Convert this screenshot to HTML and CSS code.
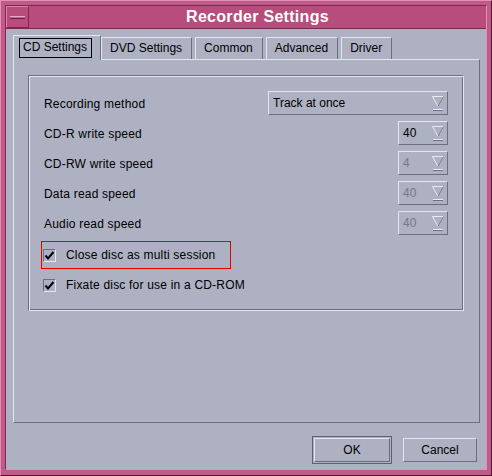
FILE: index.html
```html
<!DOCTYPE html>
<html lang="en">
  <head>
    <meta charset="UTF-8" />
    <title>Recorder Settings</title>
    <link rel="stylesheet" href="styles.css">
  </head>
  <body>
    <div class="window">
      <div class="inner">
        <div class="titlebar">
          <div class="menu-btn"><span class="dash"></span></div>
          <div class="title">Recorder Settings</div>
        </div>

        <div class="client">
          <div class="tabs">
            <div class="tab active"><span class="focus">CD Settings</span></div>
            <div class="tab">DVD Settings</div>
            <div class="tab">Common</div>
            <div class="tab">Advanced</div>
            <div class="tab">Driver</div>
          </div>

          <div class="panel">
            <div class="group">
              <div class="row">
                <span class="label">Recording method</span>
                <div class="combo wide">
                  <span>Track at once</span>
                  <svg class="arrow" width="12" height="16" viewBox="0 0 12 16">
                    <path d="M0.5 0.5 H11.5 L6 10.5 Z" fill="none" stroke="#e9ebf1" />
                    <path d="M11.5 0.5 L6 10.5" stroke="#6b6f80" />
                    <rect x="1" y="13" width="10" height="1" fill="#e9ebf1" />
                    <rect x="1" y="14" width="10" height="1" fill="#6b6f80" />
                  </svg>
                </div>
              </div>
              <div class="row">
                <span class="label">CD-R write speed</span>
                <div class="combo">
                  <span>40</span>
                  <svg class="arrow" width="12" height="16" viewBox="0 0 12 16">
                    <path d="M0.5 0.5 H11.5 L6 10.5 Z" fill="none" stroke="#e9ebf1" />
                    <path d="M11.5 0.5 L6 10.5" stroke="#6b6f80" />
                    <rect x="1" y="13" width="10" height="1" fill="#e9ebf1" />
                    <rect x="1" y="14" width="10" height="1" fill="#6b6f80" />
                  </svg>
                </div>
              </div>
              <div class="row">
                <span class="label">CD-RW write speed</span>
                <div class="combo disabled">
                  <span>4</span>
                  <svg class="arrow" width="12" height="16" viewBox="0 0 12 16">
                    <path d="M0.5 0.5 H11.5 L6 10.5 Z" fill="none" stroke="#e9ebf1" />
                    <path d="M11.5 0.5 L6 10.5" stroke="#6b6f80" />
                    <rect x="1" y="13" width="10" height="1" fill="#e9ebf1" />
                    <rect x="1" y="14" width="10" height="1" fill="#6b6f80" />
                  </svg>
                </div>
              </div>
              <div class="row">
                <span class="label">Data read speed</span>
                <div class="combo disabled">
                  <span>40</span>
                  <svg class="arrow" width="12" height="16" viewBox="0 0 12 16">
                    <path d="M0.5 0.5 H11.5 L6 10.5 Z" fill="none" stroke="#e9ebf1" />
                    <path d="M11.5 0.5 L6 10.5" stroke="#6b6f80" />
                    <rect x="1" y="13" width="10" height="1" fill="#e9ebf1" />
                    <rect x="1" y="14" width="10" height="1" fill="#6b6f80" />
                  </svg>
                </div>
              </div>
              <div class="row">
                <span class="label">Audio read speed</span>
                <div class="combo disabled">
                  <span>40</span>
                  <svg class="arrow" width="12" height="16" viewBox="0 0 12 16">
                    <path d="M0.5 0.5 H11.5 L6 10.5 Z" fill="none" stroke="#e9ebf1" />
                    <path d="M11.5 0.5 L6 10.5" stroke="#6b6f80" />
                    <rect x="1" y="13" width="10" height="1" fill="#e9ebf1" />
                    <rect x="1" y="14" width="10" height="1" fill="#6b6f80" />
                  </svg>
                </div>
              </div>

              <div class="checks">
                <div class="check highlight">
                  <span class="box">
                    <svg width="11" height="11" viewBox="0 0 11 11"><path d="M1.5 5.5 L4 8.5 L9.5 2" fill="none" stroke="#000" stroke-width="2" /></svg>
                  </span>
                  Close disc as multi session
                </div>
                <div class="check">
                  <span class="box">
                    <svg width="11" height="11" viewBox="0 0 11 11"><path d="M1.5 5.5 L4 8.5 L9.5 2" fill="none" stroke="#000" stroke-width="2" /></svg>
                  </span>
                  Fixate disc for use in a CD-ROM
                </div>
              </div>
            </div>
          </div>

          <div class="buttons">
            <div class="default-ring"><button class="btn ok">OK</button></div>
            <button class="btn">Cancel</button>
          </div>
        </div>
      </div>
    </div>
  </body>
</html>
```

FILE: styles.css
```css
* {
  margin: 0;
  padding: 0;
  box-sizing: border-box;
  font-family: "Liberation Sans", Arial, sans-serif;
}
body {
  width: 492px;
  height: 476px;
  overflow: hidden;
  font-size: 12px;
  color: #000;
}
.window {
  width: 492px;
  height: 476px;
  background-color: #c05a89;
  border: 1px solid;
  border-color: #e291b5 #4e1731 #4e1731 #e291b5;
  padding: 4px 4px 5px 4px;
  display: flex;
  flex-direction: column;
}
.inner {
  flex: 1;
  display: flex;
  flex-direction: column;
  border: 1px solid;
  border-color: #7a2a50 #e291b5 #e291b5 #7a2a50;
}
.titlebar {
  height: 23px;
  display: flex;
  background-color: #b84c7c;
  border-bottom: 1px solid #7a2a50;
}
.menu-btn {
  width: 23px;
  border: 1px solid;
  border-color: #d985ab #7a2a50 #7a2a50 #d985ab;
  display: flex;
  align-items: center;
  justify-content: center;
}
.dash {
  width: 15px;
  height: 3px;
  background-color: #c86a95;
  border-top: 1px solid #e8a5c3;
  border-bottom: 1px solid #6a1f42;
}
.title {
  flex: 1;
  text-align: center;
  color: #fff;
  font-weight: bold;
  font-size: 16px;
  line-height: 22px;
  letter-spacing: 0.3px;
}
.client {
  flex: 1;
  background-color: #adb1c2;
  padding: 6px 6px 0 7px;
  display: flex;
  flex-direction: column;
}
.tabs {
  display: flex;
  align-items: flex-end;
  height: 24px;
  gap: 3px;
  position: relative;
  z-index: 1;
}
.tab {
  height: 22px;
  padding: 0 9px 0 8px;
  line-height: 20px;
  border: 1px solid;
  border-bottom: none;
  border-color: #e4e6ed #6b6f80 transparent #e4e6ed;
  background-color: #adb1c2;
}
.tab.active {
  height: 25px;
  margin-bottom: -1px;
  padding: 2px 8px 0 5px;
  line-height: 17px;
  margin-right: -3px;
}
.focus {
  display: inline-block;
  border: 1px solid #000;
  padding: 0 4px 1px 3px;
  line-height: 17px;
}
.panel {
  height: 364px;
  border: 1px solid;
  border-color: #e4e6ed #6b6f80 #6b6f80 #e4e6ed;
  padding: 15px 15px 0 14px;
}
.group {
  border: 1px solid;
  border-color: #6b6f80 #e4e6ed #e4e6ed #6b6f80;
  box-shadow: inset 1px 1px 0 #e4e6ed, inset -1px -1px 0 #6b6f80;
  padding: 12px 15px 11px 15px;
}
.row {
  height: 30px;
  display: flex;
  align-items: center;
  justify-content: space-between;
}
.label {
  letter-spacing: 0.2px;
  padding-top: 2px;
}
.combo {
  width: 50px;
  height: 24px;
  border: 1px solid;
  border-color: #e4e6ed #6b6f80 #6b6f80 #e4e6ed;
  display: flex;
  align-items: center;
  justify-content: space-between;
  padding: 0 3px 0 4px;
}
.combo.wide {
  width: 180px;
}
.combo.disabled span {
  color: #757989;
}
.arrow {
  display: block;
  margin-top: 2px;
}
.checks {
  margin-top: 3px;
  display: flex;
  flex-direction: column;
  gap: 2px;
  margin-left: -3px;
}
.check {
  width: 190px;
  height: 28px;
  display: flex;
  align-items: center;
  padding-left: 1px;
  border: 1px solid transparent;
  white-space: nowrap;
  letter-spacing: 0.2px;
}
.check.highlight {
  border-color: #e00000;
}
.box {
  width: 13px;
  height: 13px;
  margin-right: 10px;
  border: 1px solid;
  border-color: #6b6f80 #e4e6ed #e4e6ed #6b6f80;
  display: flex;
  align-items: center;
  justify-content: center;
}
.box svg {
  display: block;
}
.buttons {
  display: flex;
  justify-content: flex-end;
  align-items: center;
  gap: 11px;
  margin-top: 13px;
  padding-right: 3px;
}
.default-ring {
  border: 1px solid #5d6172;
  padding: 1px;
}
.btn {
  width: 74px;
  height: 24px;
  background-color: #adb1c2;
  border: 1px solid;
  border-color: #e4e6ed #6b6f80 #6b6f80 #e4e6ed;
  font-size: 12px;
  color: #000;
}
.btn.ok {
  width: 76px;
}
```
